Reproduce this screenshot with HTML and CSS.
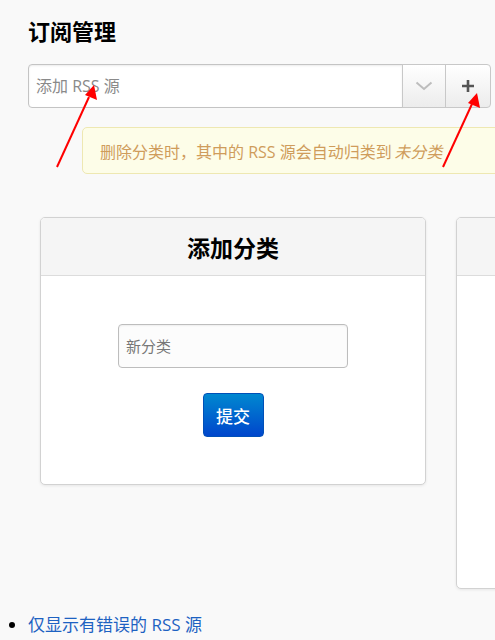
FILE: index.html
```html
<!DOCTYPE html>
<html lang="zh-CN">
<head>
    <meta charset="UTF-8">
    <meta name="viewport" content="width=device-width, initial-scale=1.0">
    <title>订阅管理</title>
    <link rel="stylesheet" href="styles.css">
</head>
<body>

<div class="page">
    <h1 class="page-title">订阅管理</h1>

    <div class="feed-add">
        <input type="text" class="feed-input" placeholder="添加 RSS 源">
        <button class="group-btn" type="button" aria-label="选择">
            <svg width="18" height="10" viewBox="0 0 18 10"><path d="M1.5 1.5 L9 8 L16.5 1.5" fill="none" stroke="#bdbdbd" stroke-width="2"/></svg>
        </button>
        <button class="group-btn group-btn-last" type="button" aria-label="添加">
            <svg width="14" height="14" viewBox="0 0 14 14"><path d="M7 1 V13 M1 7 H13" fill="none" stroke="#555" stroke-width="2.6"/></svg>
        </button>
    </div>

    <div class="notice">删除分类时，其中的 RSS 源会自动归类到&nbsp;<em>未分类</em></div>

    <div class="card-row">
        <div class="card">
            <div class="card-header">添加分类</div>
            <form class="card-body">
                <input type="text" class="category-input" placeholder="新分类">
                <button class="btn-primary" type="submit">提交</button>
            </form>
        </div>
        <div class="card card-tall">
            <div class="card-header"></div>
            <div class="card-body"></div>
        </div>
    </div>
</div>

<ul class="filters">
    <li><a href="#">仅显示有错误的 RSS 源</a></li>
</ul>

<!-- red pointers drawn over the toolbar -->
<svg class="pointers" width="495" height="640" viewBox="0 0 495 640">
    <line x1="57" y1="167" x2="89" y2="97" stroke="#f00" stroke-width="2"/>
    <polygon points="94,85 97,100 85,95" fill="#f00"/>
    <line x1="443" y1="167" x2="472" y2="104" stroke="#f00" stroke-width="2"/>
    <polygon points="477,93 480,108 468,103" fill="#f00"/>
</svg>

</body>
</html>
```

FILE: styles.css
```css
html {
    overflow: hidden;
}
body {
    margin: 0;
    background-color: #f9f9f9;
    color: #000;
    font-family: "Open Sans", "Noto Sans CJK SC", sans-serif;
    position: relative;
}
.page {
    padding: 16px 0 0 28px;
}
.page-title {
    margin: 0;
    font-size: 22px;
    line-height: 30px;
    font-weight: bold;
}

/* input group: text field + dropdown + add */
.feed-add {
    display: flex;
    margin-top: 18px;
    width: 463px;
    height: 44px;
}
.feed-input {
    flex: 1;
    min-width: 0;
    box-sizing: border-box;
    height: 44px;
    margin: 0;
    padding: 0 7px;
    border: 1px solid #c4c4c4;
    border-radius: 4px 0 0 4px;
    background-color: #fff;
    box-shadow: inset 0 1px 2px rgba(0,0,0,0.08);
    font-family: inherit;
    font-size: 16px;
    color: #333;
}
.feed-input::placeholder {
    color: #8a8a8a;
}
.group-btn {
    width: 44px;
    height: 44px;
    margin: 0 0 0 -1px;
    padding: 0;
    border: 1px solid #c8c8c8;
    background: linear-gradient(#ffffff, #ececec);
    display: flex;
    align-items: center;
    justify-content: center;
}
.group-btn-last {
    width: 46px;
    border-radius: 0 4px 4px 0;
}

.notice {
    margin: 19px 0 0 54px;
    width: 460px;
    box-sizing: border-box;
    height: 47px;
    padding: 0 17px;
    display: flex;
    align-items: center;
    white-space: nowrap;
    background-color: #fdfde8;
    border: 1px solid #eee8b2;
    border-radius: 5px;
    color: #cf9c5b;
    font-size: 16px;
}
/* CJK font has no italic face, so slant it by hand */
.notice em {
    display: inline-block;
    font-style: normal;
    transform: skewX(-12deg);
}

/* cards */
.card-row {
    display: flex;
    gap: 30px;
    align-items: flex-start;
    margin: 43px 0 0 12px;
}
.card {
    flex: none;
    box-sizing: border-box;
    width: 386px;
    background-color: #fff;
    border: 1px solid #d2d2d2;
    border-radius: 5px;
    box-shadow: 0 1px 3px rgba(0,0,0,0.08);
    overflow: hidden;
}
.card-header {
    height: 57px;
    background-color: #f5f5f5;
    border-bottom: 1px solid #dcdcdc;
    display: flex;
    align-items: center;
    justify-content: center;
    font-size: 23px;
    font-weight: bold;
}
.card-body {
    margin: 0;
    padding: 48px 0 47px;
    display: flex;
    flex-direction: column;
    align-items: center;
    gap: 25px;
}
.card-tall .card-body {
    height: 312px;
    padding: 0;
}
.category-input {
    box-sizing: border-box;
    width: 230px;
    height: 44px;
    margin: 0;
    padding: 0 7px;
    border: 1px solid #bdbdbd;
    border-radius: 4px;
    background-color: #fcfcfc;
    box-shadow: inset 0 1px 2px rgba(0,0,0,0.06);
    font-family: inherit;
    font-size: 15px;
}
.category-input::placeholder {
    color: #777;
}
.btn-primary {
    box-sizing: border-box;
    width: 61px;
    height: 44px;
    padding: 0;
    border: 1px solid #0050b8;
    border-radius: 4px;
    background: linear-gradient(#0088d0, #0046cc);
    color: #fff;
    font-family: inherit;
    font-size: 17px;
    font-weight: 500;
}

.filters {
    margin: 24px 0 0;
    padding-left: 28px;
    font-size: 17px;
    line-height: 24px;
}
.filters a {
    color: #1d62c2;
    text-decoration: none;
}

.pointers {
    position: absolute;
    left: 0;
    top: 0;
    pointer-events: none;
}
```
